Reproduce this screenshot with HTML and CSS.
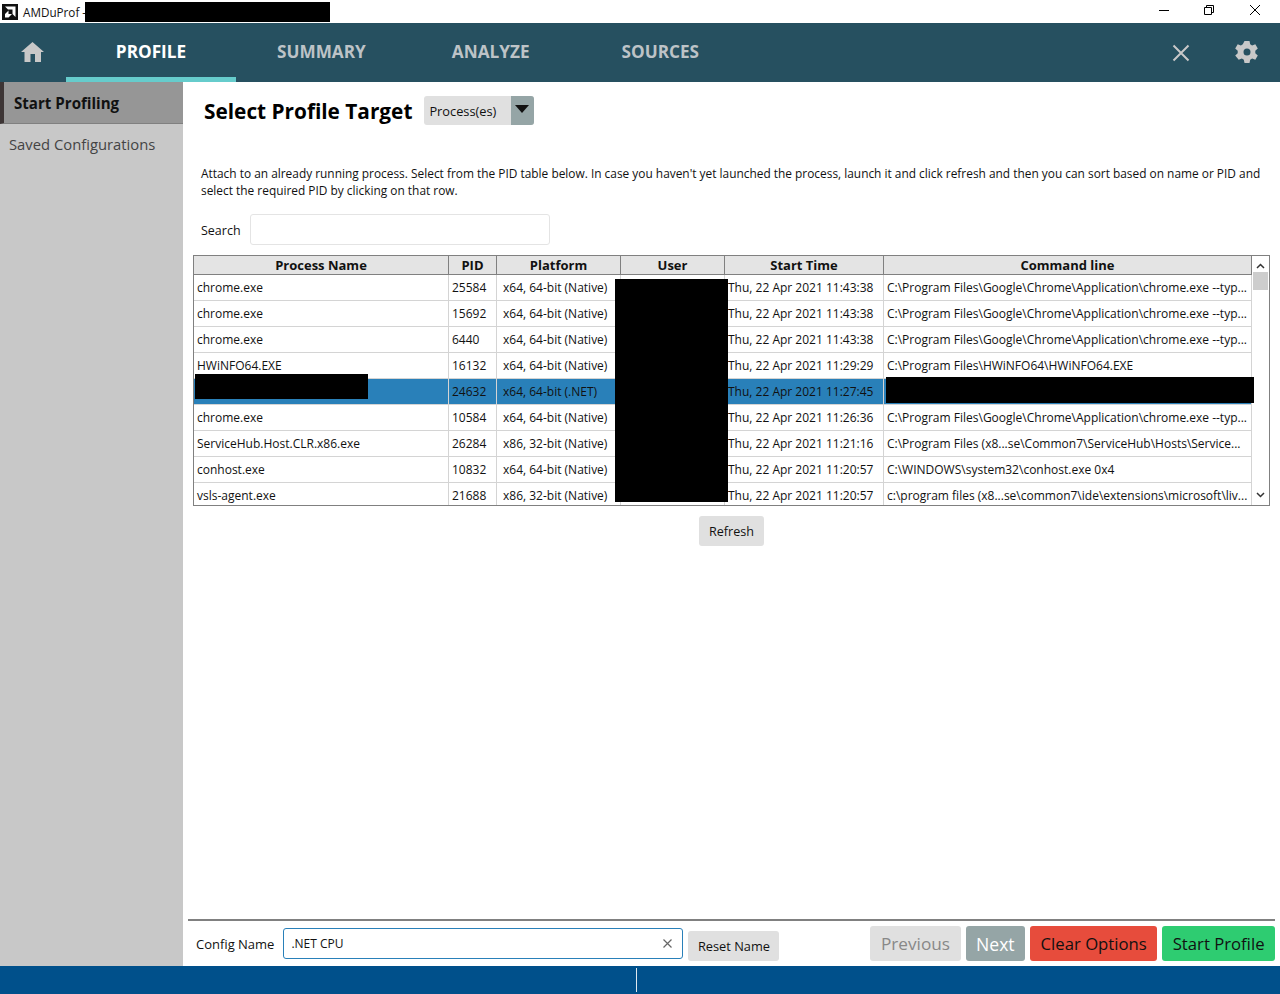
FILE: index.html
```html
<!DOCTYPE html>
<html lang="en">
<head>
    <meta charset="UTF-8">
    <title>AMDuProf</title>
    <link rel="stylesheet" href="styles.css">
</head>
<body>
    <div class="titlebar">
        <svg class="app-logo" width="16" height="16" viewBox="0 0 16 16">
            <rect width="16" height="16" fill="#111"/>
            <path d="M3 2.500h10.500V13l-3-3V5.500H6z" fill="#fff"/>
            <path d="M6.500 6.500L3 10v3.500h3.500L10 10H6.500z" fill="#fff"/>
        </svg>
        <span class="app-name">AMDuProf -</span>
        <div class="redact redact-title"></div>
        <div class="window-controls">
            <svg width="10" height="10" viewBox="0 0 10 10"><path d="M0 5.500h10" stroke="#000" fill="none"/></svg>
            <svg width="10" height="10" viewBox="0 0 10 10"><path d="M.5 2.500h7v7h-7zM2.500 2.500v-2h7v7h-2" stroke="#000" fill="none"/></svg>
            <svg class="win-close" width="10" height="10" viewBox="0 0 10 10"><path d="M0 0l10 10M10 0L0 10" stroke="#000" fill="none"/></svg>
        </div>
    </div>

    <nav class="navbar">
        <svg class="home-icon" width="24" height="20" viewBox="0 0 24 20">
            <path d="M11.500 0L0 10h3.500v10h6v-8h4.500v8h6V10H23z" fill="#c8c8c8"/>
        </svg>
        <a class="tab active">PROFILE</a>
        <a class="tab tab-summary">SUMMARY</a>
        <a class="tab tab-analyze">ANALYZE</a>
        <a class="tab tab-sources">SOURCES</a>
        <svg class="nav-close" width="18" height="18" viewBox="0 0 18 18">
            <path d="M1.500 1.500l15 15M16.500 1.500l-15 15" stroke="#c8c8c8" stroke-width="2" fill="none"/>
        </svg>
        <svg class="nav-gear" width="24" height="24" viewBox="0 0 24 24">
            <path fill="#c8c8c8" fill-rule="evenodd" d="M9.500 0h5l.7 3.300 1.900 1.100 3.200-1.100 2.500 4.300-2.500 2.200v2.400l2.500 2.200-2.500 4.300-3.200-1.100-1.900 1.100-.7 3.300h-5l-.7-3.300-1.900-1.100-3.200 1.100L.2 14.400l2.500-2.200V9.800L.2 7.600l2.500-4.300 3.200 1.100 1.900-1.100zM12 7.500a3.500 3.500 0 1 0 0 7 3.500 3.500 0 0 0 0-7z" transform="translate(0 1)"/>
        </svg>
    </nav>

    <div class="workspace">
        <aside class="sidebar">
            <div class="side-item active">Start Profiling</div>
            <div class="side-item">Saved Configurations</div>
        </aside>

        <main class="content">
            <div class="target-row">
                <h1>Select Profile Target</h1>
                <div class="select-box">
                    <span class="select-value">Process(es)</span>
                    <span class="select-arrow"></span>
                </div>
            </div>

            <p class="description">Attach to an already running process. Select from the PID table below. In case you haven't yet launched the process, launch it and click refresh and then you can sort based on name or PID and select the required PID by clicking on that row.</p>

            <div class="search-row">
                <label>Search</label>
                <input class="search-input" type="text">
            </div>

            <div class="table-wrap">
                <div class="table-clip">
                    <table class="pid-table">
                        <colgroup>
                            <col class="col-name"><col class="col-pid"><col class="col-platform"><col class="col-user"><col class="col-start"><col class="col-cmd">
                        </colgroup>
                        <thead>
                            <tr><th>Process Name</th><th>PID</th><th>Platform</th><th>User</th><th>Start Time</th><th>Command line</th></tr>
                        </thead>
                        <tbody>
                            <tr><td>chrome.exe</td><td>25584</td><td class="platform">x64, 64-bit (Native)</td><td></td><td>Thu, 22 Apr 2021 11:43:38</td><td>C:\Program Files\Google\Chrome\Application\chrome.exe --typ...</td></tr>
                            <tr><td>chrome.exe</td><td>15692</td><td class="platform">x64, 64-bit (Native)</td><td></td><td>Thu, 22 Apr 2021 11:43:38</td><td>C:\Program Files\Google\Chrome\Application\chrome.exe --typ...</td></tr>
                            <tr><td>chrome.exe</td><td>6440</td><td class="platform">x64, 64-bit (Native)</td><td></td><td>Thu, 22 Apr 2021 11:43:38</td><td>C:\Program Files\Google\Chrome\Application\chrome.exe --typ...</td></tr>
                            <tr><td>HWiNFO64.EXE</td><td>16132</td><td class="platform">x64, 64-bit (Native)</td><td></td><td>Thu, 22 Apr 2021 11:29:29</td><td>C:\Program Files\HWiNFO64\HWiNFO64.EXE</td></tr>
                            <tr class="selected"><td></td><td>24632</td><td class="platform">x64, 64-bit (.NET)</td><td></td><td>Thu, 22 Apr 2021 11:27:45</td><td></td></tr>
                            <tr><td>chrome.exe</td><td>10584</td><td class="platform">x64, 64-bit (Native)</td><td></td><td>Thu, 22 Apr 2021 11:26:36</td><td>C:\Program Files\Google\Chrome\Application\chrome.exe --typ...</td></tr>
                            <tr><td>ServiceHub.Host.CLR.x86.exe</td><td>26284</td><td class="platform">x86, 32-bit (Native)</td><td></td><td>Thu, 22 Apr 2021 11:21:16</td><td>C:\Program Files (x8...se\Common7\ServiceHub\Hosts\Service...</td></tr>
                            <tr><td>conhost.exe</td><td>10832</td><td class="platform">x64, 64-bit (Native)</td><td></td><td>Thu, 22 Apr 2021 11:20:57</td><td>C:\WINDOWS\system32\conhost.exe 0x4</td></tr>
                            <tr><td>vsls-agent.exe</td><td>21688</td><td class="platform">x86, 32-bit (Native)</td><td></td><td>Thu, 22 Apr 2021 11:20:57</td><td>c:\program files (x8...se\common7\ide\extensions\microsoft\liv...</td></tr>
                        </tbody>
                    </table>
                </div>
                <div class="scrollbar">
                    <svg width="9" height="6" viewBox="0 0 9 6"><path d="M1 5l3.500-3.500L8 5" stroke="#333" stroke-width="1.500" fill="none"/></svg>
                    <div class="scroll-thumb"></div>
                    <svg class="scroll-down" width="9" height="6" viewBox="0 0 9 6"><path d="M1 1l3.500 3.500L8 1" stroke="#333" stroke-width="1.500" fill="none"/></svg>
                </div>
                <div class="redact redact-name"></div>
                <div class="redact redact-user"></div>
                <div class="redact redact-cmd"></div>
            </div>

            <div class="refresh-row">
                <button class="btn-small">Refresh</button>
            </div>

            <div class="footer">
                <label>Config Name</label>
                <div class="config-input">
                    <span>.NET CPU</span>
                    <svg width="9" height="9" viewBox="0 0 9 9"><path d="M.5.500l8 8M8.500.500l-8 8" stroke="#666" stroke-width="1.200" fill="none"/></svg>
                </div>
                <button class="btn-small btn-reset">Reset Name</button>
                <div class="footer-actions">
                    <button class="btn-big btn-previous">Previous</button>
                    <button class="btn-big btn-next">Next</button>
                    <button class="btn-big btn-clear">Clear Options</button>
                    <button class="btn-big btn-start">Start Profile</button>
                </div>
            </div>
        </main>
    </div>

    <div class="statusbar"><span class="status-divider"></span></div>
</body>
</html>
```
FILE: styles.css
```css
* {
    margin: 0;
    padding: 0;
    box-sizing: border-box;
}

html, body {
    height: 994px;
    overflow: hidden;
}

body {
    font-family: "Open Sans", Arial, sans-serif;
    font-size: 12px;
    color: #111;
    background-color: #fff;
    display: flex;
    flex-direction: column;
}

.redact {
    position: absolute;
    background-color: #000;
}

/* Title bar */
.titlebar {
    position: relative;
    height: 23px;
    display: flex;
    align-items: center;
    padding-left: 2px;
    background-color: #fff;
}

.app-name {
    margin-left: 5px;
    font-size: 11.7px;
}

.redact-title {
    left: 85px;
    top: 2px;
    width: 245px;
    height: 20px;
}

.window-controls {
    margin-left: auto;
    display: flex;
    gap: 35px;
    padding-right: 20px;
    margin-top: -3px;
}

.win-close {
    margin-left: 1px;
}

/* Nav */
.navbar {
    height: 59px;
    background-color: #265060;
    display: flex;
    align-items: stretch;
    flex-shrink: 0;
}

.home-icon {
    margin: 19px 21px 0 21px;
}

.tab {
    font-size: 17.2px;
    font-weight: 700;
    color: #bdc3c7;
    line-height: 57px;
}

.tab.active {
    width: 170px;
    text-align: center;
    color: #fff;
    border-bottom: 5px solid #66cccc;
}

.tab-summary {
    margin-left: 41px;
}

.tab-analyze {
    margin-left: 86px;
}

.tab-sources {
    margin-left: 92px;
}

.nav-close {
    margin: 21px 0 0 auto;
}

.nav-gear {
    margin: 17px 21px 0 45px;
}

/* Layout */
.workspace {
    flex: 1;
    display: flex;
    min-height: 0;
}

.sidebar {
    width: 183px;
    flex-shrink: 0;
    background-color: #c8c8c8;
}

.side-item {
    height: 41px;
    line-height: 41px;
    padding-left: 9px;
    font-size: 14.8px;
    color: #444;
}

.side-item.active {
    height: 42px;
    line-height: 42px;
    padding-left: 10px;
    font-size: 15.1px;
    font-weight: 700;
    color: #111;
    background-color: #969696;
    border-left: 4px solid #3d3535;
    border-bottom: 1px solid #808080;
}

.content {
    flex: 1;
    min-width: 0;
    display: flex;
    flex-direction: column;
    padding: 14px 10px 0;
}

.target-row {
    display: flex;
    align-items: center;
    height: 29px;
    padding-left: 11px;
}

h1 {
    font-size: 20.8px;
    font-weight: 700;
    color: #000;
    margin-right: 12px;
}

.select-box {
    width: 110px;
    height: 29px;
    display: flex;
    background-color: #e0e0e0;
    border-radius: 3px;
    overflow: hidden;
}

.select-value {
    flex: 1;
    padding-left: 5px;
    line-height: 31px;
    font-size: 12.8px;
}

.select-arrow {
    width: 23px;
    background-color: #95a5a6;
    position: relative;
}

.select-arrow::after {
    content: "";
    position: absolute;
    left: 4px;
    top: 9px;
    border-left: 7.500px solid transparent;
    border-right: 7.500px solid transparent;
    border-top: 8px solid #111;
}

.description {
    margin-top: 40px;
    padding: 0 8px;
    line-height: 17px;
    font-size: 11.9px;
}

.search-row {
    display: flex;
    align-items: center;
    margin-top: 15px;
    height: 31px;
    padding-left: 8px;
    gap: 9px;
}

.search-row label {
    padding-top: 2px;
    font-size: 12.5px;
}

.search-input {
    width: 300px;
    height: 31px;
    border: 1px solid #e4e4e4;
    border-radius: 3px;
}

/* PID table */
.table-wrap {
    position: relative;
    margin-top: 10px;
    height: 251px;
    border: 1px solid #808080;
    display: flex;
}

.table-clip {
    width: 1058px;
    flex-shrink: 0;
    overflow: hidden;
}

.pid-table {
    width: 1058px;
    table-layout: fixed;
    border-collapse: separate;
    border-spacing: 0;
}

.col-name { width: 255px; }
.col-pid { width: 48px; }
.col-platform { width: 124px; }
.col-user { width: 104px; }
.col-start { width: 159px; }
.col-cmd { width: 368px; }

.pid-table th {
    height: 19px;
    font-size: 13px;
    font-weight: 700;
    line-height: 17px;
    background-color: #e4e4e4;
    border-right: 1px solid #808080;
    border-bottom: 1px solid #808080;
    padding-top: 1px;
}

.pid-table td {
    height: 26px;
    padding: 0 3px;
    white-space: nowrap;
    overflow: hidden;
    border-right: 1px solid #d4d4d4;
    border-bottom: 1px solid #d4d4d4;
}

.pid-table td.platform {
    padding-left: 6px;
}

.pid-table tr.selected td {
    background-color: #2980b9;
}

.scrollbar {
    flex: 1;
    display: flex;
    flex-direction: column;
    align-items: center;
    padding-top: 7px;
}

.scroll-thumb {
    width: 15px;
    height: 18px;
    margin-top: 3px;
    background-color: #cdcdcd;
}

.scroll-down {
    margin-top: auto;
    margin-bottom: 7px;
}

.redact-name {
    left: 1px;
    top: 118px;
    width: 173px;
    height: 25px;
}

.redact-user {
    left: 421px;
    top: 23px;
    width: 113px;
    height: 223px;
}

.redact-cmd {
    left: 692px;
    top: 121px;
    width: 368px;
    height: 26px;
}

.refresh-row {
    display: flex;
    justify-content: center;
    margin-top: 10px;
}

.btn-small {
    height: 30px;
    padding: 0 9.500px;
    font-family: inherit;
    font-size: 12.6px;
    color: #111;
    background-color: #e0e0e0;
    border: none;
    border-radius: 3px;
}

/* Footer */
.footer {
    margin: auto -5px 0;
    height: 47px;
    border-top: 2px solid #808080;
    display: flex;
    align-items: flex-start;
    padding: 7px 0 0 8px;
}

.footer label {
    line-height: 33px;
    font-size: 13px;
    margin-right: 9px;
}

.config-input {
    width: 400px;
    height: 31px;
    display: flex;
    align-items: center;
    justify-content: space-between;
    padding: 0 10px 0 7px;
    border: 1px solid #2980b9;
    border-radius: 3px;
    font-size: 12px;
}

.btn-reset {
    margin: 3px 0 0 5px;
    font-size: 12.8px;
}

.footer-actions {
    margin: -2px 0 0 auto;
    display: flex;
    gap: 5px;
}

.btn-big {
    height: 35px;
    padding: 0 10.500px;
    font-family: inherit;
    font-size: 16.7px;
    border: none;
    border-radius: 3px;
    color: #111;
}

.btn-previous {
    background-color: #e0e0e0;
    color: #888;
    font-size: 17.2px;
}

.btn-next {
    background-color: #95a5a6;
    color: #fff;
    font-size: 17.6px;
}

.btn-clear {
    background-color: #e74c3c;
}

.btn-start {
    background-color: #2ecc71;
}

/* Status bar */
.statusbar {
    height: 28px;
    flex-shrink: 0;
    background-color: #00508b;
    padding-left: 636px;
    padding-top: 2px;
}

.status-divider {
    display: block;
    width: 1px;
    height: 24px;
    background-color: #dfe8ef;
}
```
